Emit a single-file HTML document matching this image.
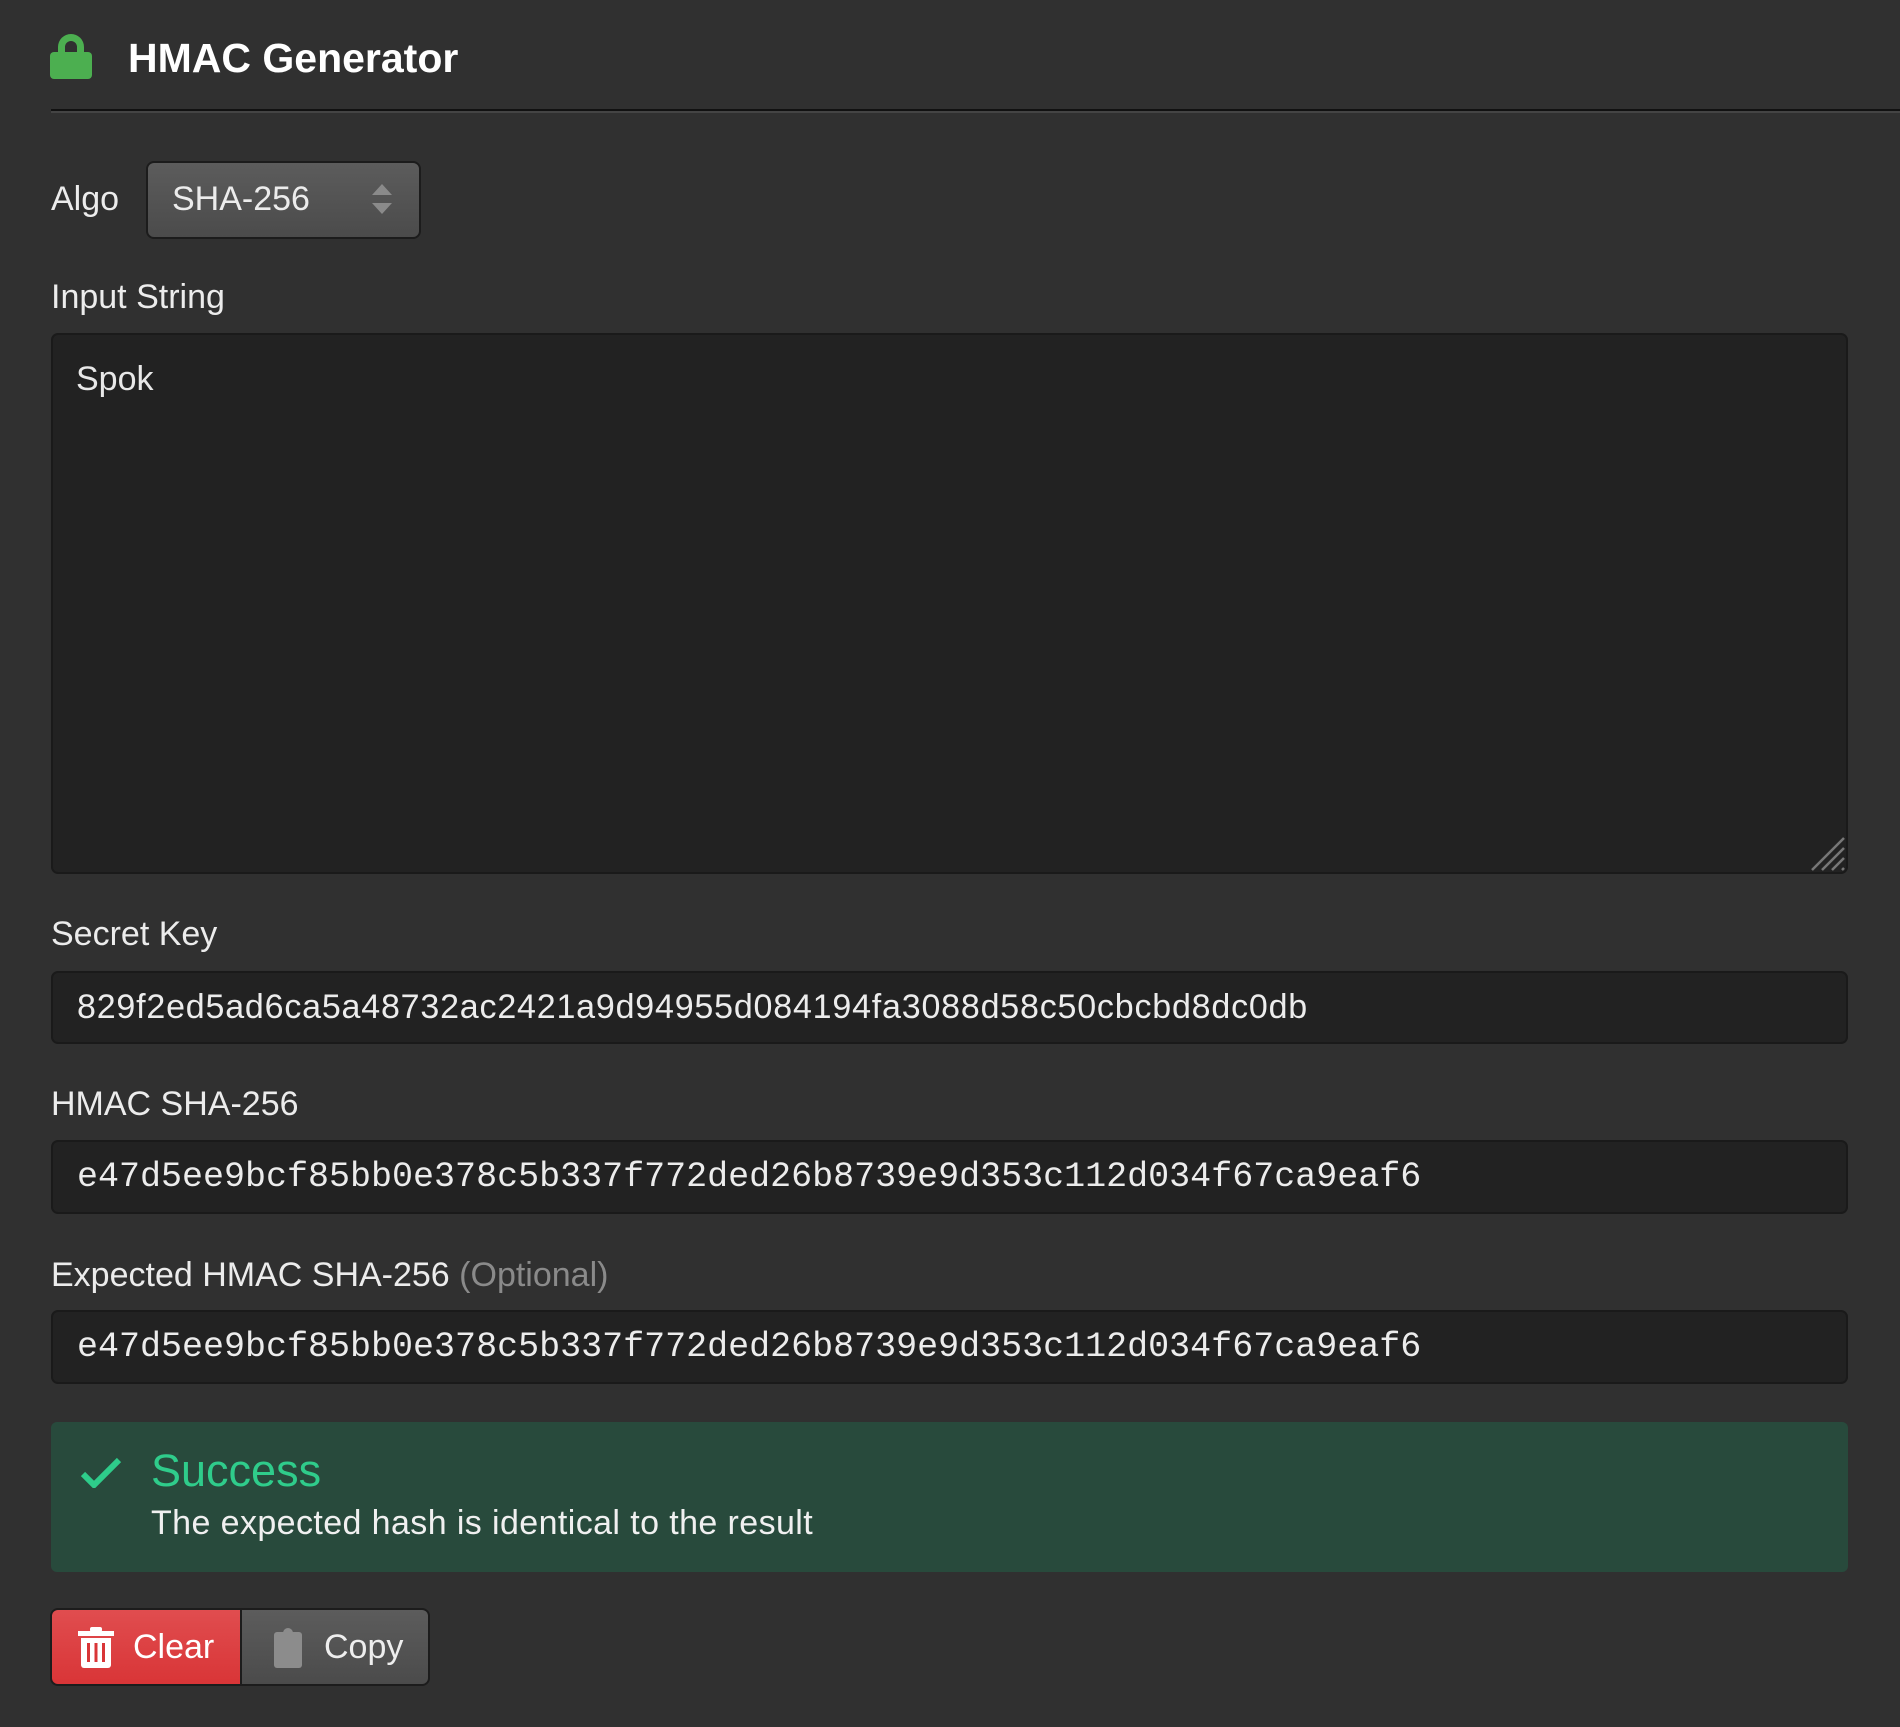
<!DOCTYPE html>
<html><head><meta charset="utf-8"><style>
*{box-sizing:border-box;margin:0;padding:0}
body{width:1900px;height:1727px;background:#303030;font-family:"Liberation Sans",sans-serif;color:#e8e8e8;position:relative;overflow:hidden}
.a{position:absolute}
.lbl{position:absolute;left:51px;font-size:34px;line-height:40px;color:#ececec}
.inp{position:absolute;left:51px;width:1797px;background:#222;border:2px solid #1a1a1a;border-radius:7px;padding-left:24px;font-size:34px;color:#ececec;display:flex;align-items:center}
.mono{font-family:"Liberation Mono",monospace;font-size:35px}
</style></head><body>
<svg class="a" style="left:50px;top:33px" width="42" height="46" viewBox="0 0 42 46"><path d="M8 20V14a13 13 0 0 1 26 0v6h-7v-6a6 6 0 0 0-12 0v6z" fill="#4caf50"/><rect x="0" y="19" width="42" height="27" rx="4" fill="#4caf50"/></svg>
<div class="a" style="left:128px;top:31px;font-size:41px;font-weight:bold;color:#fff;line-height:54px">HMAC Generator</div>
<div class="a" style="left:51px;top:109px;width:1849px;height:2px;background:#111"></div>
<div class="a" style="left:51px;top:111px;width:1849px;height:2px;background:#444"></div>
<div class="lbl" style="top:179px">Algo</div>
<div class="a" style="left:146px;top:161px;width:275px;height:78px;border:2px solid #1c1c1c;border-radius:8px;background:linear-gradient(#5c5c5c,#4b4b4b)"></div>
<div class="a" style="left:172px;top:179px;font-size:34px;line-height:40px;color:#ececec">SHA-256</div>
<svg class="a" style="left:371px;top:183px" width="22" height="32" viewBox="0 0 22 32"><path d="M11 1L21 12H1z M11 31L21 20H1z" fill="#8a8a8a"/></svg>
<div class="lbl" style="top:277px">Input String</div>
<div class="a" style="left:51px;top:333px;width:1797px;height:541px;background:#222;border:2px solid #1a1a1a;border-radius:7px"></div>
<div class="a" style="left:76px;top:359px;font-size:34px;line-height:40px">Spok</div>
<svg class="a" style="left:1810px;top:836px" width="36" height="36" viewBox="0 0 36 36"><path d="M2 34L34 2M12 34L34 12M22 34L34 22M32 34L34 32" stroke="#777" stroke-width="2.5"/></svg>
<div class="lbl" style="top:914px">Secret Key</div>
<div class="inp" style="top:971px;height:73px;letter-spacing:0.8px">829f2ed5ad6ca5a48732ac2421a9d94955d084194fa3088d58c50cbcbd8dc0db</div>
<div class="lbl" style="top:1084px">HMAC SHA-256</div>
<div class="inp mono" style="top:1140px;height:74px">e47d5ee9bcf85bb0e378c5b337f772ded26b8739e9d353c112d034f67ca9eaf6</div>
<div class="lbl" style="top:1255px">Expected HMAC SHA-256 <span style="color:#8a8a8a">(Optional)</span></div>
<div class="inp mono" style="top:1310px;height:74px">e47d5ee9bcf85bb0e378c5b337f772ded26b8739e9d353c112d034f67ca9eaf6</div>
<div class="a" style="left:51px;top:1422px;width:1797px;height:150px;background:#284a3c;border-radius:6px"></div>
<svg class="a" style="left:80px;top:1456px" width="42" height="32" viewBox="0 0 42 32"><path d="M3 18L14 29L39 4" stroke="#2ecc8a" stroke-width="6" fill="none"/></svg>
<div class="a" style="left:151px;top:1443px;font-size:45px;line-height:56px;color:#2fcc8b">Success</div>
<div class="a" style="left:151px;top:1503px;font-size:34px;line-height:40px;color:#f0f0f0;letter-spacing:0.4px">The expected hash is identical to the result</div>
<div class="a" style="left:50px;top:1608px;width:380px;height:78px;border:2px solid #1c1c1c;border-radius:8px;background:#1c1c1c"></div>
<div class="a" style="left:52px;top:1610px;width:188px;height:74px;border-radius:6px 0 0 6px;background:linear-gradient(#e04d4f,#d93537)"></div>
<div class="a" style="left:242px;top:1610px;width:186px;height:74px;border-radius:0 6px 6px 0;background:linear-gradient(#5c5c5c,#4b4b4b)"></div>
<svg class="a" style="left:78px;top:1627px" width="36" height="41" viewBox="0 0 36 41"><rect x="0" y="4" width="36" height="5" fill="#fff"/><rect x="12" y="0" width="12" height="5" rx="2" fill="#fff"/><path d="M3 11h30v27a3 3 0 0 1-3 3H6a3 3 0 0 1-3-3z" fill="#fff"/><rect x="9" y="16" width="3" height="19" fill="#d93537"/><rect x="16.5" y="16" width="3" height="19" fill="#d93537"/><rect x="24" y="16" width="3" height="19" fill="#d93537"/></svg>
<div class="a" style="left:133px;top:1627px;font-size:34px;line-height:40px;color:#fff">Clear</div>
<svg class="a" style="left:274px;top:1627px" width="28" height="41" viewBox="0 0 28 41"><rect x="0" y="5" width="28" height="36" rx="3" fill="#8c8c8c"/><path d="M9 6a5 5 0 0 1 10 0z" fill="#8c8c8c"/></svg>
<div class="a" style="left:324px;top:1627px;font-size:34px;line-height:40px;color:#eee">Copy</div>
</body></html>
